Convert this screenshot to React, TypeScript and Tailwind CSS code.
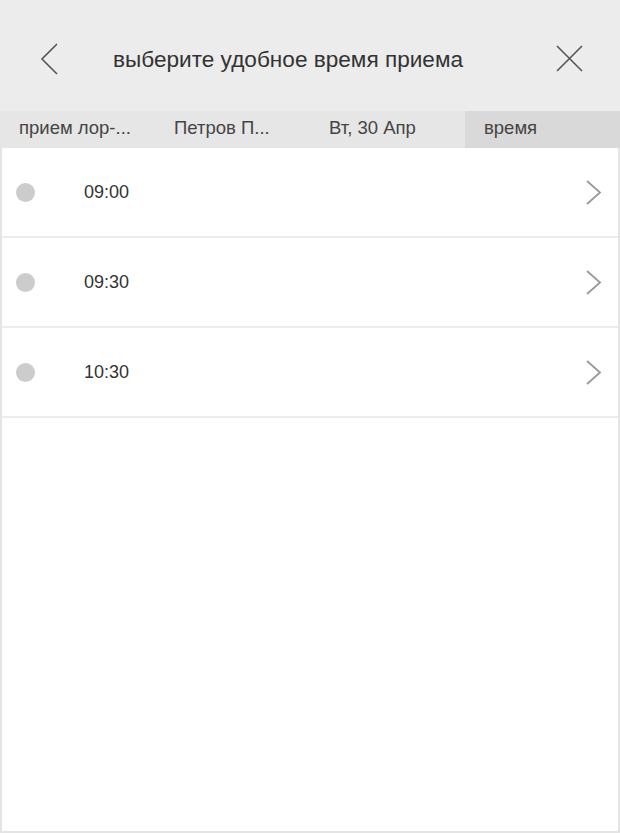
const tabs = ['прием лор-...', 'Петров П...', 'Вт, 30 Апр', 'время'];
const slots = ['09:00', '09:30', '10:30'];

export default function App() {
  return (
    <div
      className="w-[620px] h-[833px] flex flex-col bg-white text-[#333]"
      style={{ fontFamily: '"Liberation Sans", Arial, sans-serif' }}
    >
      {/* Header */}
      <div className="h-[111px] bg-[#ececec] flex items-center pl-[40px] pr-[37px] pt-[6px]">
        <svg width="19" height="32" viewBox="0 0 19 32" className="shrink-0">
          <polyline points="17,1 2,16 17,31" fill="none" stroke="#555" strokeWidth="1.6" />
        </svg>
        <div className="flex-1 pl-[54px] pt-[2px] text-[22.6px] text-[#333]">выберите удобное время приема</div>
        <svg width="27" height="27" viewBox="0 0 27 27" className="shrink-0">
          <path d="M1 1 L26 26 M26 1 L1 26" fill="none" stroke="#555" strokeWidth="1.6" />
        </svg>
      </div>

      {/* Steps */}
      <div className="h-[37px] bg-[#e6e6e6] grid grid-cols-4">
        {tabs.map((t, i) => (
          <div
            key={t}
            className={`flex items-center pl-[19px] pb-[3px] text-[18.5px] text-[#444] ${i === 3 ? 'bg-[#d9d9d9]' : ''}`}
          >
            {t}
          </div>
        ))}
      </div>

      {/* Slots */}
      <div className="flex-1 border-x-2 border-b-2 border-[#e4e4e4]">
        {slots.map((s) => (
          <div key={s} className="h-[90px] flex items-center border-b-2 border-[#ececec] pl-[14px] pr-[16px]">
            <span className="w-[19px] h-[19px] rounded-full bg-[#cccccc] shrink-0" />
            <span className="ml-[49px] flex-1 text-[18px] text-[#333]">{s}</span>
            <svg width="17" height="25" viewBox="0 0 17 25" className="shrink-0">
              <polyline points="2,1 15,12.5 2,24" fill="none" stroke="#999" strokeWidth="1.8" />
            </svg>
          </div>
        ))}
      </div>
    </div>
  );
}
